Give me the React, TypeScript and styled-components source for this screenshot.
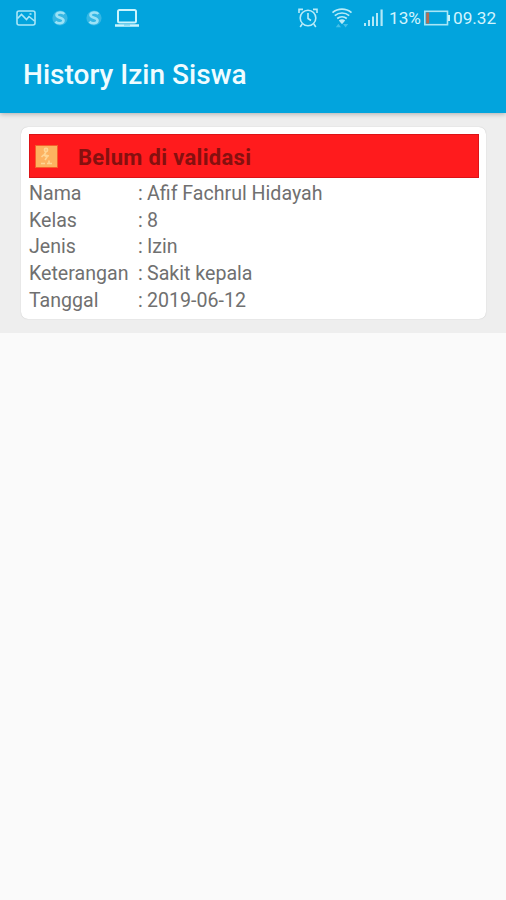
import React from "react";
import styled, { createGlobalStyle } from "styled-components";

const GlobalStyle = createGlobalStyle`
  * { box-sizing: border-box; }
  html, body { margin: 0; padding: 0; background: #fafafa; }
  body { font-family: Roboto, "Noto Sans", sans-serif; }
`;

const Screen = styled.div`
  display: flex;
  flex-direction: column;
  width: 506px;
  height: 900px;
  overflow: hidden;
  background: #fafafa;
`;

const Header = styled.header`
  position: relative;
  flex: none;
  height: 113px;
  background: #02a4dd;
  color: #fff;
  box-shadow: 0 1px 5px rgba(0, 0, 0, 0.28);
`;

const StatusBar = styled.div`
  display: flex;
  align-items: center;
  justify-content: space-between;
  height: 35px;
  padding: 0 11px 0 15px;
  color: #d3f4fd;
`;

const StatusGroup = styled.div`
  display: flex;
  align-items: center;
`;

const Glyph = styled.svg<{ $gap?: number }>`
  display: block;
  flex: none;
  margin-left: ${(p) => p.$gap ?? 0}px;
`;

const StatusText = styled.span<{ $gap: number; $width: number }>`
  width: ${(p) => p.$width}px;
  margin-left: ${(p) => p.$gap}px;
  font-size: 17.2px;
  line-height: 36px;
  white-space: nowrap;
`;

const Title = styled.h1`
  margin: 0;
  padding: 22px 23px 0;
  font-size: 28px;
  line-height: 36px;
  font-weight: 500;
  letter-spacing: 0.02px;
  color: #f0fcff;
`;

const List = styled.main`
  flex: none;
  height: 220px;
  padding: 14px 20px 14px 21px;
  background: #eeeeee;
`;

const Card = styled.article`
  height: 192px;
  padding: 7px 7px 0 8px;
  background: #fff;
  border-radius: 7px;
  box-shadow: 0 0 1px rgba(0, 0, 0, 0.25);
`;

const StatusBanner = styled.div`
  display: flex;
  align-items: center;
  height: 44px;
  padding-left: 5px;
  background: #ff1b1d;
  border: 1px solid #dc1317;
`;

const BannerText = styled.strong`
  margin-left: 20px;
  padding-top: 3px;
  font-size: 22px;
  line-height: 40px;
  font-weight: 700;
  letter-spacing: 0.32px;
  color: #85100f;
`;

const Details = styled.dl`
  display: grid;
  grid-template-columns: 109px 1fr;
  grid-auto-rows: 26.7px;
  margin: 3px 0 0;
  font-size: 19.6px;
  line-height: 26.7px;
  color: #707070;
  white-space: nowrap;
`;

const Label = styled.dt`
  margin: 0;
`;

const Value = styled.dd`
  display: grid;
  grid-template-columns: 9px 1fr;
  margin: 0;
`;

const details = [
  ["Nama", "Afif Fachrul Hidayah"],
  ["Kelas", "8"],
  ["Jenis", "Izin"],
  ["Keterangan", "Sakit kepala"],
  ["Tanggal", "2019-06-12"],
];

const PictureIcon = () => (
  <Glyph width="22" height="18" viewBox="0 0 22 18" fill="none" stroke="#a9e6f8" strokeWidth="1.6">
    <rect x="2" y="2" width="18" height="14" rx="2" />
    <path d="M2.5 9.5 6.5 5.5l5 5 2.5-3 5.5 4.5" />
    <path d="M14.5 5h2" />
  </Glyph>
);

const SyncIcon = ({ gap }: { gap: number }) => (
  <Glyph $gap={gap} width="18" height="18" viewBox="0 0 18 18" fill="none">
    <circle cx="9" cy="9" r="7.6" fill="#35b7e4" />
    <path d="M13.3 5C11.5 2.8 5.5 3 5.5 6.1c0 3.3 7 2.2 7 5.5 0 3.2-6 3.4-8 1" stroke="#9be2f6" strokeWidth="2.6" />
  </Glyph>
);

const LaptopIcon = () => (
  <Glyph $gap={11} width="26" height="20" viewBox="0 0 26 20" fill="none" stroke="#cbf4fd" strokeWidth="2">
    <rect x="4" y="2" width="18" height="12.5" rx="1.5" />
    <path d="M1 17.5h24" strokeWidth="2.5" />
    <path d="M10 17h6" stroke="#62c8e9" strokeWidth="1" />
  </Glyph>
);

const AlarmIcon = () => (
  <Glyph width="22" height="22" viewBox="0 0 22 22" fill="none" stroke="#b9ebf8" strokeWidth="1.6">
    <circle cx="11" cy="11" r="7.8" />
    <path d="M11 6v5.5l3 2M2 6V2.4h4M16 2.4h4V6M5.2 17l-2 3M16.8 17l2 3" />
  </Glyph>
);

const WifiIcon = () => (
  <Glyph $gap={12} width="22" height="22" viewBox="0 0 22 22" fill="none" stroke="#b9ebf8" strokeWidth="1.7">
    <path d="M1.5 5.6c5.5-4.6 13.5-4.6 19 0M3.8 8.6c4.2-3.5 10.2-3.5 14.4 0M6.2 11.5c2.8-2.3 6.8-2.3 9.6 0" />
    <path d="m7.8 13.4 3.2 3.8 3.2-3.8c-2-1.4-4.4-1.4-6.4 0Z" fill="#b9ebf8" stroke="none" />
    <path d="m4.8 20.2 2.6-3.4 2.6 3.4zM12 17h5.2l-2.6 3.4z" fill="#43bfe8" stroke="none" />
  </Glyph>
);

const SignalIcon = () => (
  <Glyph $gap={10} width="22" height="20" viewBox="0 0 22 20" fill="#b3e8f7">
    <rect x="1" y="15" width="2" height="3" />
    <rect x="5" y="12" width="2" height="6" />
    <rect x="9" y="8.5" width="2" height="9.5" />
    <rect x="13" y="5" width="2" height="13" />
    <rect x="17.5" y="1.5" width="2.2" height="16.5" />
  </Glyph>
);

const BatteryIcon = () => (
  <Glyph $gap={3} width="28" height="18" viewBox="0 0 28 18" fill="none">
    <rect x="1.8" y="2.3" width="22.7" height="13.4" stroke="#a9e6f6" strokeWidth="1.6" />
    <path d="M26 6v6" stroke="#c9f4fc" strokeWidth="2" />
    <rect x="3.2" y="3.5" width="3" height="11" fill="#b86c52" />
  </Glyph>
);

const PermitIcon = () => (
  <Glyph width="23" height="23" viewBox="0 0 23 23" fill="none">
    <rect x=".5" y=".5" width="22" height="22" fill="#fdb260" stroke="#f4602c" />
    <g stroke="#ffd594" strokeWidth="1.6">
      <circle cx="11" cy="5" r="1.6" />
      <path d="m11 7-2 3 3 2-2 3M8.5 10l-2 2M10 10l4 1" />
      <path d="M6 18.5h4M12 18.5h5M14 15.5v3" />
    </g>
  </Glyph>
);

export default function App() {
  return (
    <Screen>
      <GlobalStyle />
      <Header>
        <StatusBar>
          <StatusGroup>
            <PictureIcon />
            <SyncIcon gap={14} />
            <SyncIcon gap={16} />
            <LaptopIcon />
          </StatusGroup>
          <StatusGroup>
            <AlarmIcon />
            <WifiIcon />
            <SignalIcon />
            <StatusText $gap={4} $width={31}>13%</StatusText>
            <BatteryIcon />
            <StatusText $gap={2} $width={42}>09.32</StatusText>
          </StatusGroup>
        </StatusBar>
        <Title>History Izin Siswa</Title>
      </Header>
      <List>
        <Card>
          <StatusBanner>
            <PermitIcon />
            <BannerText>Belum di validasi</BannerText>
          </StatusBanner>
          <Details>
            {details.map(([label, value]) => (
              <React.Fragment key={label}>
                <Label>{label}</Label>
                <Value>
                  <span>:</span>
                  <span>{value}</span>
                </Value>
              </React.Fragment>
            ))}
          </Details>
        </Card>
      </List>
    </Screen>
  );
}
